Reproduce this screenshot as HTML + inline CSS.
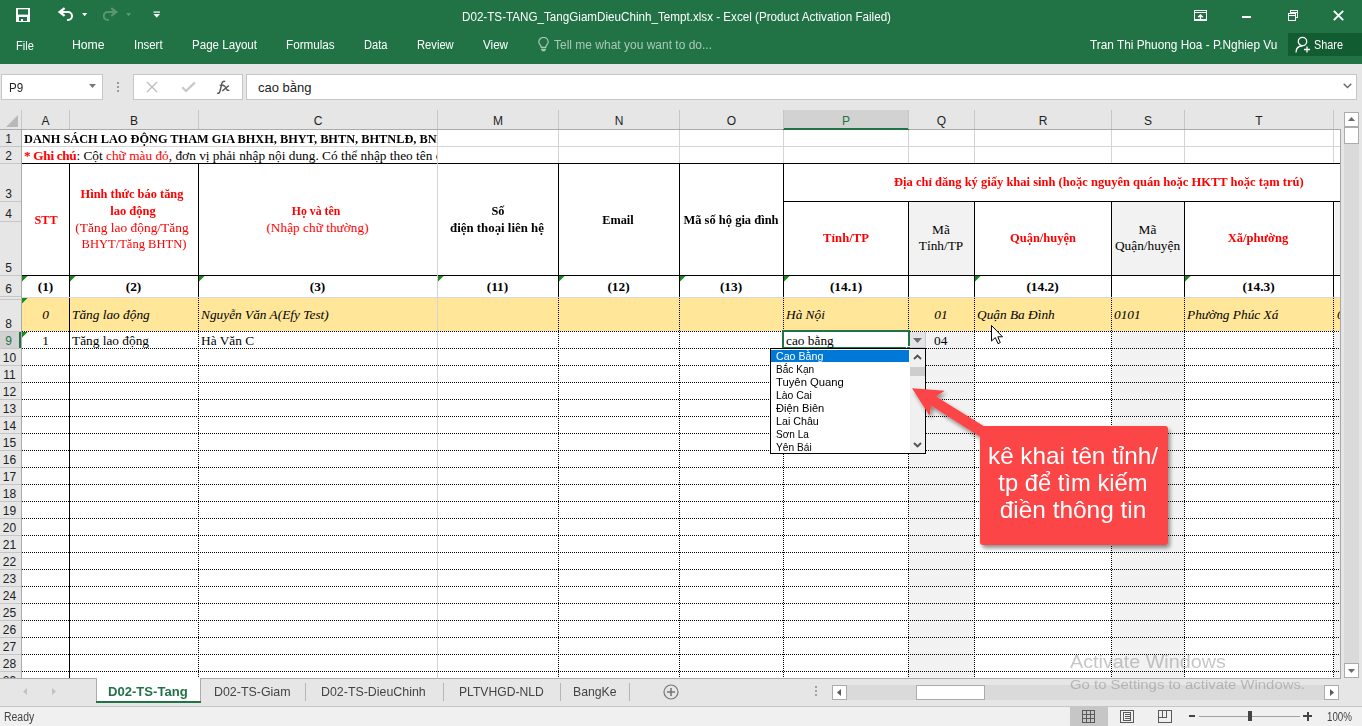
<!DOCTYPE html>
<html><head><meta charset="utf-8"><style>
html,body{margin:0;padding:0;width:1362px;height:726px;overflow:hidden;background:#fff;position:relative}
body div, body svg{position:absolute}
body div div{position:absolute}
</style></head><body>
<div style="left:0px;top:0px;width:1362px;height:64px;background:#217346"></div>
<div style="top:10.84px;font-family:'Liberation Sans', sans-serif;font-size:12px;line-height:12px;color:#fff;font-weight:normal;white-space:nowrap;transform:scaleX(0.9707);transform-origin:0 50%;left:462px;">D02-TS-TANG_TangGiamDieuChinh_Tempt.xlsx - Excel (Product Activation Failed)</div>
<svg style="left:0px;top:0px" width="170" height="30" viewBox="0 0 170 30"><rect x="16" y="8" width="14" height="14" fill="#fff"/><rect x="18" y="9.3" width="10" height="5.3" fill="#217346"/><rect x="19" y="17" width="8" height="4" fill="#217346"/><rect x="21" y="19" width="2" height="2" fill="#fff"/><path d="M60 12H68A4 4 0 0 1 68 20H67" fill="none" stroke="#fff" stroke-width="2"/><path d="M64.6 8.2L59.6 12L64.6 15.8" fill="none" stroke="#fff" stroke-width="2.3"/><path d="M82 13H87.2L84.6 16.2Z" fill="#fff"/><path d="M115.8 12H107.8A4 4 0 0 0 107.8 20H108.8" fill="none" stroke="#5a9673" stroke-width="2"/><path d="M111.2 8.2L116.2 12L111.2 15.8" fill="none" stroke="#5a9673" stroke-width="2.3"/><path d="M126 13H131.2L128.6 16.2Z" fill="#5a9673"/><rect x="153.5" y="11.5" width="6.5" height="1.2" fill="#fff"/><path d="M153.5 14H160L156.75 17.8Z" fill="#fff"/></svg>
<svg style="left:1193px;top:10px" width="15" height="11" viewBox="0 0 15 11" shape-rendering="crispEdges"><rect x="1.5" y="0.5" width="12" height="9.5" fill="none" stroke="#fff" stroke-width="1.2"/><line x1="1.5" y1="2.5" x2="13.5" y2="2.5" stroke="#fff" stroke-width="1"/></svg>
<svg style="left:1193px;top:10px" width="15" height="11" viewBox="0 0 15 11"><path d="M7.5 10.5V5M5.2 7.3L7.5 5L9.8 7.3" fill="none" stroke="#fff" stroke-width="1.3"/></svg>
<div style="left:1242px;top:16px;width:9px;height:2px;background:#fff"></div>
<svg style="left:1288px;top:10px" width="11" height="11" viewBox="0 0 11 11" shape-rendering="crispEdges"><rect x="0.5" y="3.5" width="7" height="7" fill="none" stroke="#fff" stroke-width="1.2"/><line x1="0.5" y1="5" x2="7.5" y2="5" stroke="#fff" stroke-width="1"/><path d="M2.5 3V0.5H9.5V7.5H8" fill="none" stroke="#fff" stroke-width="1.2"/><line x1="2.5" y1="2" x2="9.5" y2="2" stroke="#fff" stroke-width="1"/></svg>
<svg style="left:1333px;top:10px" width="11" height="11" viewBox="0 0 11 11"><path d="M0.8 0.8L10.2 10.2M10.2 0.8L0.8 10.2" stroke="#fff" stroke-width="1.9"/></svg>
<div style="top:40.14px;font-family:'Liberation Sans', sans-serif;font-size:12px;line-height:12px;color:#fff;font-weight:normal;white-space:nowrap;transform:scaleX(0.9213);transform-origin:0 50%;left:16.2px;">File</div>
<div style="top:39.24px;font-family:'Liberation Sans', sans-serif;font-size:12px;line-height:12px;color:#fff;font-weight:normal;white-space:nowrap;transform:scaleX(1.0175);transform-origin:0 50%;left:72.4px;">Home</div>
<div style="top:39.24px;font-family:'Liberation Sans', sans-serif;font-size:12px;line-height:12px;color:#fff;font-weight:normal;white-space:nowrap;transform:scaleX(0.9533);transform-origin:0 50%;left:134.4px;">Insert</div>
<div style="top:39.24px;font-family:'Liberation Sans', sans-serif;font-size:12px;line-height:12px;color:#fff;font-weight:normal;white-space:nowrap;transform:scaleX(0.9647);transform-origin:0 50%;left:192px;">Page Layout</div>
<div style="top:39.24px;font-family:'Liberation Sans', sans-serif;font-size:12px;line-height:12px;color:#fff;font-weight:normal;white-space:nowrap;transform:scaleX(0.9732);transform-origin:0 50%;left:286.1px;">Formulas</div>
<div style="top:39.24px;font-family:'Liberation Sans', sans-serif;font-size:12px;line-height:12px;color:#fff;font-weight:normal;white-space:nowrap;transform:scaleX(0.9259);transform-origin:0 50%;left:364.2px;">Data</div>
<div style="top:39.24px;font-family:'Liberation Sans', sans-serif;font-size:12px;line-height:12px;color:#fff;font-weight:normal;white-space:nowrap;transform:scaleX(0.9324);transform-origin:0 50%;left:417.1px;">Review</div>
<div style="top:39.24px;font-family:'Liberation Sans', sans-serif;font-size:12px;line-height:12px;color:#fff;font-weight:normal;white-space:nowrap;transform:scaleX(0.9690);transform-origin:0 50%;left:482.8px;">View</div>
<svg style="left:538px;top:37px" width="11" height="15" viewBox="0 0 11 15"><path d="M3.3 10.3C3.3 8.3 0.8 7.3 0.8 4.9a4.7 4.5 0 0 1 9.4 0c0 2.4-2.5 3.4-2.5 5.4z" fill="none" stroke="#a9c8b5" stroke-width="1.2"/><path d="M3 12.3h5M3.8 13.6h3.4" stroke="#a9c8b5" stroke-width="1.2"/></svg>
<div style="top:39.24px;font-family:'Liberation Sans', sans-serif;font-size:12px;line-height:12px;color:#a9c8b5;font-weight:normal;white-space:nowrap;transform:scaleX(0.9994);transform-origin:0 50%;left:554.1px;">Tell me what you want to do...</div>
<div style="top:39.24px;font-family:'Liberation Sans', sans-serif;font-size:12px;line-height:12px;color:#fff;font-weight:normal;white-space:nowrap;transform:scaleX(0.9851);transform-origin:0 50%;left:1090.4px;">Tran Thi Phuong Hoa - P.Nghiep Vu</div>
<div style="left:1288px;top:33px;width:74px;height:23px;background:#125c32"></div>
<svg style="left:1295px;top:36px" width="16" height="17" viewBox="0 0 16 17"><circle cx="7.5" cy="5.5" r="4.2" fill="none" stroke="#fff" stroke-width="1.3"/><path d="M1 16.5c0-4 2.5-6.5 6.5-6.5" fill="none" stroke="#fff" stroke-width="1.3"/><path d="M12 10.5v6M9 13.5h6" stroke="#fff" stroke-width="1.3"/></svg>
<div style="top:39.24px;font-family:'Liberation Sans', sans-serif;font-size:12px;line-height:12px;color:#fff;font-weight:normal;white-space:nowrap;transform:scaleX(0.9051);transform-origin:0 50%;left:1314px;">Share</div>
<div style="left:0px;top:64px;width:1362px;height:46px;background:#e6e6e6"></div>
<div style="left:1px;top:74px;width:102px;height:26px;background:#fff;border:1px solid #c6c6c6;box-sizing:border-box"></div>
<div style="top:82.02px;font-family:'Liberation Sans', sans-serif;font-size:12.5px;line-height:12.5px;color:#222;font-weight:normal;white-space:nowrap;transform:scaleX(0.9273);transform-origin:0 50%;left:8.7px;">P9</div>
<svg style="left:89px;top:84px" width="7" height="4" viewBox="0 0 7 4"><path d="M0 0h7L3.5 4z" fill="#777"/></svg>
<div style="left:117px;top:82px;width:2px;height:2px;background:#9a9a9a"></div>
<div style="left:117px;top:86px;width:2px;height:2px;background:#9a9a9a"></div>
<div style="left:117px;top:90px;width:2px;height:2px;background:#9a9a9a"></div>
<div style="left:133px;top:74px;width:110px;height:26px;background:#fff;border:1px solid #c6c6c6;box-sizing:border-box"></div>
<svg style="left:146px;top:81px" width="12" height="12" viewBox="0 0 12 12"><path d="M1 1L11 11M11 1L1 11" stroke="#bdbdbd" stroke-width="1.3"/></svg>
<svg style="left:181px;top:81px" width="15" height="12" viewBox="0 0 15 12"><path d="M1.2 6.2L5 10L13.8 1.6" fill="none" stroke="#c8c8c8" stroke-width="2.2"/></svg>
<svg style="left:214px;top:78px" width="20" height="18" viewBox="214 78 20 18"><path d="M225.2 81.6C223.6 81.0 222.4 81.6 221.9 83.4L219.9 91.6C219.4 93.3 218.5 93.6 217.2 93.0" fill="none" stroke="#555" stroke-width="1.5"/><path d="M219.6 85.3H223.9" stroke="#555" stroke-width="1.2"/><path d="M222.6 85.6C224.6 85.0 225.3 86.5 226 88.2C226.6 89.8 227.4 90.9 229.4 90.3M228.9 85.6C227.3 86.3 225.3 88.9 222.2 90.9" fill="none" stroke="#555" stroke-width="1.3"/></svg>
<div style="left:246px;top:74px;width:1111px;height:26px;background:#fff;border:1px solid #c6c6c6;box-sizing:border-box"></div>
<div style="top:81.00px;font-family:'Liberation Sans', sans-serif;font-size:13px;line-height:13px;color:#222;font-weight:normal;white-space:nowrap;left:258px;">cao bằng</div>
<svg style="left:1343px;top:83px" width="9" height="6" viewBox="0 0 9 6"><path d="M0.7 0.7L4.5 4.5L8.3 0.7" fill="none" stroke="#666" stroke-width="1.3"/></svg>
<div style="left:0px;top:110px;width:1341px;height:19px;background:#e6e6e6"></div>
<div style="left:0px;top:129px;width:1341px;height:1px;background:#ababab"></div>
<svg style="left:5px;top:114px" width="14" height="14" viewBox="0 0 14 14"><path d="M13 1V13H1z" fill="#b9b9b9"/></svg>
<div style="left:784px;top:110px;width:124px;height:19px;background:#d2d2d2"></div>
<div style="left:783px;top:128px;width:126px;height:2px;background:#217346"></div>
<div style="left:21px;top:110px;width:1px;height:19px;background:#c6c6c6"></div>
<div style="left:69px;top:110px;width:1px;height:19px;background:#c6c6c6"></div>
<div style="left:198px;top:110px;width:1px;height:19px;background:#c6c6c6"></div>
<div style="left:437px;top:110px;width:1px;height:19px;background:#c6c6c6"></div>
<div style="left:558px;top:110px;width:1px;height:19px;background:#c6c6c6"></div>
<div style="left:679px;top:110px;width:1px;height:19px;background:#c6c6c6"></div>
<div style="left:783px;top:110px;width:1px;height:19px;background:#c6c6c6"></div>
<div style="left:908px;top:110px;width:1px;height:19px;background:#c6c6c6"></div>
<div style="left:974px;top:110px;width:1px;height:19px;background:#c6c6c6"></div>
<div style="left:1111px;top:110px;width:1px;height:19px;background:#c6c6c6"></div>
<div style="left:1184px;top:110px;width:1px;height:19px;background:#c6c6c6"></div>
<div style="left:1333px;top:110px;width:1px;height:19px;background:#c6c6c6"></div>
<div style="top:115.24px;font-family:'Liberation Sans', sans-serif;font-size:12px;line-height:12px;color:#222;font-weight:normal;white-space:nowrap;left:-4.5px;width:100px;text-align:center;">A</div>
<div style="top:115.24px;font-family:'Liberation Sans', sans-serif;font-size:12px;line-height:12px;color:#222;font-weight:normal;white-space:nowrap;left:84.0px;width:100px;text-align:center;">B</div>
<div style="top:115.24px;font-family:'Liberation Sans', sans-serif;font-size:12px;line-height:12px;color:#222;font-weight:normal;white-space:nowrap;left:268.0px;width:100px;text-align:center;">C</div>
<div style="top:115.24px;font-family:'Liberation Sans', sans-serif;font-size:12px;line-height:12px;color:#222;font-weight:normal;white-space:nowrap;left:448.0px;width:100px;text-align:center;">M</div>
<div style="top:115.24px;font-family:'Liberation Sans', sans-serif;font-size:12px;line-height:12px;color:#222;font-weight:normal;white-space:nowrap;left:569.0px;width:100px;text-align:center;">N</div>
<div style="top:115.24px;font-family:'Liberation Sans', sans-serif;font-size:12px;line-height:12px;color:#222;font-weight:normal;white-space:nowrap;left:681.5px;width:100px;text-align:center;">O</div>
<div style="top:115.24px;font-family:'Liberation Sans', sans-serif;font-size:12px;line-height:12px;color:#217346;font-weight:normal;white-space:nowrap;left:796.0px;width:100px;text-align:center;">P</div>
<div style="top:115.24px;font-family:'Liberation Sans', sans-serif;font-size:12px;line-height:12px;color:#222;font-weight:normal;white-space:nowrap;left:891.5px;width:100px;text-align:center;">Q</div>
<div style="top:115.24px;font-family:'Liberation Sans', sans-serif;font-size:12px;line-height:12px;color:#222;font-weight:normal;white-space:nowrap;left:993.0px;width:100px;text-align:center;">R</div>
<div style="top:115.24px;font-family:'Liberation Sans', sans-serif;font-size:12px;line-height:12px;color:#222;font-weight:normal;white-space:nowrap;left:1098.0px;width:100px;text-align:center;">S</div>
<div style="top:115.24px;font-family:'Liberation Sans', sans-serif;font-size:12px;line-height:12px;color:#222;font-weight:normal;white-space:nowrap;left:1209.0px;width:100px;text-align:center;">T</div>
<div style="left:22px;top:130px;width:1318px;height:548px;background:#fff"></div>
<div style="left:0px;top:130px;width:21px;height:548px;background:#e6e6e6"></div>
<div style="left:21px;top:130px;width:1px;height:548px;background:#ababab"></div>
<div style="left:1340px;top:129px;width:1px;height:549px;background:#a6a6a6"></div>
<div style="left:0px;top:146px;width:21px;height:1px;background:#c6c6c6"></div>
<div style="left:0px;top:163px;width:21px;height:1px;background:#c6c6c6"></div>
<div style="left:0px;top:201px;width:21px;height:1px;background:#c6c6c6"></div>
<div style="left:0px;top:221px;width:21px;height:1px;background:#c6c6c6"></div>
<div style="left:0px;top:275px;width:21px;height:1px;background:#c6c6c6"></div>
<div style="left:0px;top:296px;width:21px;height:1px;background:#c6c6c6"></div>
<div style="left:0px;top:331px;width:21px;height:1px;background:#c6c6c6"></div>
<div style="left:0px;top:348px;width:21px;height:1px;background:#c6c6c6"></div>
<div style="left:0px;top:365px;width:21px;height:1px;background:#c6c6c6"></div>
<div style="left:0px;top:382px;width:21px;height:1px;background:#c6c6c6"></div>
<div style="left:0px;top:399px;width:21px;height:1px;background:#c6c6c6"></div>
<div style="left:0px;top:416px;width:21px;height:1px;background:#c6c6c6"></div>
<div style="left:0px;top:433px;width:21px;height:1px;background:#c6c6c6"></div>
<div style="left:0px;top:450px;width:21px;height:1px;background:#c6c6c6"></div>
<div style="left:0px;top:467px;width:21px;height:1px;background:#c6c6c6"></div>
<div style="left:0px;top:484px;width:21px;height:1px;background:#c6c6c6"></div>
<div style="left:0px;top:501px;width:21px;height:1px;background:#c6c6c6"></div>
<div style="left:0px;top:518px;width:21px;height:1px;background:#c6c6c6"></div>
<div style="left:0px;top:535px;width:21px;height:1px;background:#c6c6c6"></div>
<div style="left:0px;top:552px;width:21px;height:1px;background:#c6c6c6"></div>
<div style="left:0px;top:569px;width:21px;height:1px;background:#c6c6c6"></div>
<div style="left:0px;top:586px;width:21px;height:1px;background:#c6c6c6"></div>
<div style="left:0px;top:603px;width:21px;height:1px;background:#c6c6c6"></div>
<div style="left:0px;top:620px;width:21px;height:1px;background:#c6c6c6"></div>
<div style="left:0px;top:637px;width:21px;height:1px;background:#c6c6c6"></div>
<div style="left:0px;top:654px;width:21px;height:1px;background:#c6c6c6"></div>
<div style="left:0px;top:671px;width:21px;height:1px;background:#c6c6c6"></div>
<div style="left:0px;top:299px;width:21px;height:1px;background:#c6c6c6"></div>
<div style="left:0px;top:332px;width:21px;height:16px;background:#d2d2d2"></div>
<div style="left:19px;top:332px;width:2px;height:16px;background:#217346"></div>
<div style="top:132.64px;font-family:'Liberation Sans', sans-serif;font-size:12px;line-height:12px;color:#222;font-weight:normal;white-space:nowrap;left:-11.4px;width:40px;text-align:center;">1</div>
<div style="top:149.64px;font-family:'Liberation Sans', sans-serif;font-size:12px;line-height:12px;color:#222;font-weight:normal;white-space:nowrap;left:-11.4px;width:40px;text-align:center;">2</div>
<div style="top:187.64px;font-family:'Liberation Sans', sans-serif;font-size:12px;line-height:12px;color:#222;font-weight:normal;white-space:nowrap;left:-11.4px;width:40px;text-align:center;">3</div>
<div style="top:207.64px;font-family:'Liberation Sans', sans-serif;font-size:12px;line-height:12px;color:#222;font-weight:normal;white-space:nowrap;left:-11.4px;width:40px;text-align:center;">4</div>
<div style="top:261.64px;font-family:'Liberation Sans', sans-serif;font-size:12px;line-height:12px;color:#222;font-weight:normal;white-space:nowrap;left:-11.4px;width:40px;text-align:center;">5</div>
<div style="top:282.64px;font-family:'Liberation Sans', sans-serif;font-size:12px;line-height:12px;color:#222;font-weight:normal;white-space:nowrap;left:-11.4px;width:40px;text-align:center;">6</div>
<div style="top:317.64px;font-family:'Liberation Sans', sans-serif;font-size:12px;line-height:12px;color:#222;font-weight:normal;white-space:nowrap;left:-11.4px;width:40px;text-align:center;">8</div>
<div style="top:334.64px;font-family:'Liberation Sans', sans-serif;font-size:12px;line-height:12px;color:#217346;font-weight:normal;white-space:nowrap;left:-11.4px;width:40px;text-align:center;">9</div>
<div style="top:351.64px;font-family:'Liberation Sans', sans-serif;font-size:12px;line-height:12px;color:#222;font-weight:normal;white-space:nowrap;left:-10.6px;width:40px;text-align:center;">10</div>
<div style="top:368.64px;font-family:'Liberation Sans', sans-serif;font-size:12px;line-height:12px;color:#222;font-weight:normal;white-space:nowrap;left:-10.6px;width:40px;text-align:center;">11</div>
<div style="top:385.64px;font-family:'Liberation Sans', sans-serif;font-size:12px;line-height:12px;color:#222;font-weight:normal;white-space:nowrap;left:-10.6px;width:40px;text-align:center;">12</div>
<div style="top:402.64px;font-family:'Liberation Sans', sans-serif;font-size:12px;line-height:12px;color:#222;font-weight:normal;white-space:nowrap;left:-10.6px;width:40px;text-align:center;">13</div>
<div style="top:419.64px;font-family:'Liberation Sans', sans-serif;font-size:12px;line-height:12px;color:#222;font-weight:normal;white-space:nowrap;left:-10.6px;width:40px;text-align:center;">14</div>
<div style="top:436.64px;font-family:'Liberation Sans', sans-serif;font-size:12px;line-height:12px;color:#222;font-weight:normal;white-space:nowrap;left:-10.6px;width:40px;text-align:center;">15</div>
<div style="top:453.64px;font-family:'Liberation Sans', sans-serif;font-size:12px;line-height:12px;color:#222;font-weight:normal;white-space:nowrap;left:-10.6px;width:40px;text-align:center;">16</div>
<div style="top:470.64px;font-family:'Liberation Sans', sans-serif;font-size:12px;line-height:12px;color:#222;font-weight:normal;white-space:nowrap;left:-10.6px;width:40px;text-align:center;">17</div>
<div style="top:487.64px;font-family:'Liberation Sans', sans-serif;font-size:12px;line-height:12px;color:#222;font-weight:normal;white-space:nowrap;left:-10.6px;width:40px;text-align:center;">18</div>
<div style="top:504.64px;font-family:'Liberation Sans', sans-serif;font-size:12px;line-height:12px;color:#222;font-weight:normal;white-space:nowrap;left:-10.6px;width:40px;text-align:center;">19</div>
<div style="top:521.64px;font-family:'Liberation Sans', sans-serif;font-size:12px;line-height:12px;color:#222;font-weight:normal;white-space:nowrap;left:-10.6px;width:40px;text-align:center;">20</div>
<div style="top:538.64px;font-family:'Liberation Sans', sans-serif;font-size:12px;line-height:12px;color:#222;font-weight:normal;white-space:nowrap;left:-10.6px;width:40px;text-align:center;">21</div>
<div style="top:555.64px;font-family:'Liberation Sans', sans-serif;font-size:12px;line-height:12px;color:#222;font-weight:normal;white-space:nowrap;left:-10.6px;width:40px;text-align:center;">22</div>
<div style="top:572.64px;font-family:'Liberation Sans', sans-serif;font-size:12px;line-height:12px;color:#222;font-weight:normal;white-space:nowrap;left:-10.6px;width:40px;text-align:center;">23</div>
<div style="top:589.64px;font-family:'Liberation Sans', sans-serif;font-size:12px;line-height:12px;color:#222;font-weight:normal;white-space:nowrap;left:-10.6px;width:40px;text-align:center;">24</div>
<div style="top:606.64px;font-family:'Liberation Sans', sans-serif;font-size:12px;line-height:12px;color:#222;font-weight:normal;white-space:nowrap;left:-10.6px;width:40px;text-align:center;">25</div>
<div style="top:623.64px;font-family:'Liberation Sans', sans-serif;font-size:12px;line-height:12px;color:#222;font-weight:normal;white-space:nowrap;left:-10.6px;width:40px;text-align:center;">26</div>
<div style="top:640.64px;font-family:'Liberation Sans', sans-serif;font-size:12px;line-height:12px;color:#222;font-weight:normal;white-space:nowrap;left:-10.6px;width:40px;text-align:center;">27</div>
<div style="top:657.64px;font-family:'Liberation Sans', sans-serif;font-size:12px;line-height:12px;color:#222;font-weight:normal;white-space:nowrap;left:-10.6px;width:40px;text-align:center;">28</div>
<div style="top:674.64px;font-family:'Liberation Sans', sans-serif;font-size:12px;line-height:12px;color:#222;font-weight:normal;white-space:nowrap;left:-10.6px;width:40px;text-align:center;">29</div>
<div style="left:909px;top:202px;width:65px;height:74px;background:#f2f2f2"></div>
<div style="left:1112px;top:202px;width:72px;height:74px;background:#f2f2f2"></div>
<div style="left:22px;top:298px;width:1318px;height:33px;background:#ffe699"></div>
<div style="left:909px;top:332px;width:65px;height:346px;background:#f2f2f2"></div>
<div style="left:1112px;top:332px;width:72px;height:346px;background:#f2f2f2"></div>
<div style="left:1334px;top:332px;width:6px;height:346px;background:#f2f2f2"></div>
<div style="left:1335px;top:202px;width:5px;height:73px;background:#f2f2f2"></div>
<div style="left:22px;top:146px;width:1318px;height:1px;background:#d4d4d4"></div>
<div style="left:437px;top:130px;width:1px;height:33px;background:#d4d4d4"></div>
<div style="left:558px;top:130px;width:1px;height:33px;background:#d4d4d4"></div>
<div style="left:679px;top:130px;width:1px;height:33px;background:#d4d4d4"></div>
<div style="left:783px;top:130px;width:1px;height:33px;background:#d4d4d4"></div>
<div style="left:908px;top:130px;width:1px;height:33px;background:#d4d4d4"></div>
<div style="left:974px;top:130px;width:1px;height:33px;background:#d4d4d4"></div>
<div style="left:1111px;top:130px;width:1px;height:33px;background:#d4d4d4"></div>
<div style="left:1184px;top:130px;width:1px;height:33px;background:#d4d4d4"></div>
<div style="left:1333px;top:130px;width:1px;height:33px;background:#d4d4d4"></div>
<div style="left:22px;top:163px;width:1318px;height:1px;background:#000"></div>
<div style="left:783px;top:201px;width:557px;height:1px;background:#000"></div>
<div style="left:22px;top:275px;width:1318px;height:1px;background:#000"></div>
<div style="left:69px;top:163px;width:1px;height:134px;background:#000"></div>
<div style="left:198px;top:163px;width:1px;height:134px;background:#000"></div>
<div style="left:558px;top:163px;width:1px;height:134px;background:#000"></div>
<div style="left:679px;top:163px;width:1px;height:134px;background:#000"></div>
<div style="left:783px;top:163px;width:1px;height:134px;background:#000"></div>
<div style="left:908px;top:201px;width:1px;height:96px;background:#000"></div>
<div style="left:974px;top:201px;width:1px;height:96px;background:#000"></div>
<div style="left:1111px;top:201px;width:1px;height:96px;background:#000"></div>
<div style="left:1184px;top:201px;width:1px;height:96px;background:#000"></div>
<div style="left:1333px;top:201px;width:1px;height:96px;background:#000"></div>
<div style="left:22px;top:297px;width:1318px;height:1px;background:#d9d9d9"></div>
<div style="left:22px;top:331px;width:1318px;height:1px;background:repeating-linear-gradient(90deg,#000 0 1px,transparent 1px 2px)"></div>
<div style="left:22px;top:348px;width:1318px;height:1px;background:repeating-linear-gradient(90deg,#000 0 1px,transparent 1px 2px)"></div>
<div style="left:22px;top:365px;width:1318px;height:1px;background:repeating-linear-gradient(90deg,#000 0 1px,transparent 1px 2px)"></div>
<div style="left:22px;top:382px;width:1318px;height:1px;background:repeating-linear-gradient(90deg,#000 0 1px,transparent 1px 2px)"></div>
<div style="left:22px;top:399px;width:1318px;height:1px;background:repeating-linear-gradient(90deg,#000 0 1px,transparent 1px 2px)"></div>
<div style="left:22px;top:416px;width:1318px;height:1px;background:repeating-linear-gradient(90deg,#000 0 1px,transparent 1px 2px)"></div>
<div style="left:22px;top:433px;width:1318px;height:1px;background:repeating-linear-gradient(90deg,#000 0 1px,transparent 1px 2px)"></div>
<div style="left:22px;top:450px;width:1318px;height:1px;background:repeating-linear-gradient(90deg,#000 0 1px,transparent 1px 2px)"></div>
<div style="left:22px;top:467px;width:1318px;height:1px;background:repeating-linear-gradient(90deg,#000 0 1px,transparent 1px 2px)"></div>
<div style="left:22px;top:484px;width:1318px;height:1px;background:repeating-linear-gradient(90deg,#000 0 1px,transparent 1px 2px)"></div>
<div style="left:22px;top:501px;width:1318px;height:1px;background:repeating-linear-gradient(90deg,#000 0 1px,transparent 1px 2px)"></div>
<div style="left:22px;top:518px;width:1318px;height:1px;background:repeating-linear-gradient(90deg,#000 0 1px,transparent 1px 2px)"></div>
<div style="left:22px;top:535px;width:1318px;height:1px;background:repeating-linear-gradient(90deg,#000 0 1px,transparent 1px 2px)"></div>
<div style="left:22px;top:552px;width:1318px;height:1px;background:repeating-linear-gradient(90deg,#000 0 1px,transparent 1px 2px)"></div>
<div style="left:22px;top:569px;width:1318px;height:1px;background:repeating-linear-gradient(90deg,#000 0 1px,transparent 1px 2px)"></div>
<div style="left:22px;top:586px;width:1318px;height:1px;background:repeating-linear-gradient(90deg,#000 0 1px,transparent 1px 2px)"></div>
<div style="left:22px;top:603px;width:1318px;height:1px;background:repeating-linear-gradient(90deg,#000 0 1px,transparent 1px 2px)"></div>
<div style="left:22px;top:620px;width:1318px;height:1px;background:repeating-linear-gradient(90deg,#000 0 1px,transparent 1px 2px)"></div>
<div style="left:22px;top:637px;width:1318px;height:1px;background:repeating-linear-gradient(90deg,#000 0 1px,transparent 1px 2px)"></div>
<div style="left:22px;top:654px;width:1318px;height:1px;background:repeating-linear-gradient(90deg,#000 0 1px,transparent 1px 2px)"></div>
<div style="left:22px;top:671px;width:1318px;height:1px;background:repeating-linear-gradient(90deg,#000 0 1px,transparent 1px 2px)"></div>
<div style="left:69px;top:298px;width:1px;height:380px;background:#000"></div>
<div style="left:198px;top:298px;width:1px;height:380px;background:repeating-linear-gradient(180deg,#000 0 1px,transparent 1px 2px)"></div>
<div style="left:558px;top:298px;width:1px;height:380px;background:repeating-linear-gradient(180deg,#000 0 1px,transparent 1px 2px)"></div>
<div style="left:679px;top:298px;width:1px;height:380px;background:repeating-linear-gradient(180deg,#000 0 1px,transparent 1px 2px)"></div>
<div style="left:783px;top:298px;width:1px;height:380px;background:repeating-linear-gradient(180deg,#000 0 1px,transparent 1px 2px)"></div>
<div style="left:908px;top:298px;width:1px;height:380px;background:repeating-linear-gradient(180deg,#000 0 1px,transparent 1px 2px)"></div>
<div style="left:974px;top:298px;width:1px;height:380px;background:repeating-linear-gradient(180deg,#000 0 1px,transparent 1px 2px)"></div>
<div style="left:1111px;top:298px;width:1px;height:380px;background:repeating-linear-gradient(180deg,#000 0 1px,transparent 1px 2px)"></div>
<div style="left:1184px;top:298px;width:1px;height:380px;background:repeating-linear-gradient(180deg,#000 0 1px,transparent 1px 2px)"></div>
<div style="left:1333px;top:298px;width:1px;height:380px;background:repeating-linear-gradient(180deg,#000 0 1px,transparent 1px 2px)"></div>
<div style="left:437px;top:130px;width:1px;height:548px;background:#d4d4d4"></div>
<svg style="left:22px;top:276px" width="6" height="6" viewBox="0 0 6 6"><path d="M0 0H5.6L0 5.6z" fill="#128a1e"/></svg>
<svg style="left:70px;top:276px" width="6" height="6" viewBox="0 0 6 6"><path d="M0 0H5.6L0 5.6z" fill="#128a1e"/></svg>
<svg style="left:199px;top:276px" width="6" height="6" viewBox="0 0 6 6"><path d="M0 0H5.6L0 5.6z" fill="#128a1e"/></svg>
<svg style="left:438px;top:276px" width="6" height="6" viewBox="0 0 6 6"><path d="M0 0H5.6L0 5.6z" fill="#128a1e"/></svg>
<svg style="left:559px;top:276px" width="6" height="6" viewBox="0 0 6 6"><path d="M0 0H5.6L0 5.6z" fill="#128a1e"/></svg>
<svg style="left:680px;top:276px" width="6" height="6" viewBox="0 0 6 6"><path d="M0 0H5.6L0 5.6z" fill="#128a1e"/></svg>
<svg style="left:784px;top:276px" width="6" height="6" viewBox="0 0 6 6"><path d="M0 0H5.6L0 5.6z" fill="#128a1e"/></svg>
<svg style="left:975px;top:276px" width="6" height="6" viewBox="0 0 6 6"><path d="M0 0H5.6L0 5.6z" fill="#128a1e"/></svg>
<svg style="left:1185px;top:276px" width="6" height="6" viewBox="0 0 6 6"><path d="M0 0H5.6L0 5.6z" fill="#128a1e"/></svg>
<svg style="left:22px;top:298px" width="6" height="6" viewBox="0 0 6 6"><path d="M0 0H5.6L0 5.6z" fill="#128a1e"/></svg>
<svg style="left:22px;top:332px" width="6" height="6" viewBox="0 0 6 6"><path d="M0 0H5.6L0 5.6z" fill="#128a1e"/></svg>
<div style="left:22px;top:130px;width:415px;height:33px;overflow:hidden">
<div style="top:2.14px;font-family:'Liberation Serif', serif;font-size:13.33px;line-height:13.33px;color:#000;font-weight:bold;white-space:nowrap;transform:scaleX(0.9250);transform-origin:0 50%;left:2px;">DANH SÁCH LAO ĐỘNG THAM GIA BHXH, BHYT, BHTN, BHTNLĐ, BNN</div>
<div style="top:18.84px;font-family:'Liberation Serif', serif;font-size:13.33px;line-height:13.33px;color:#000;font-weight:normal;white-space:nowrap;left:2px;"><b style="color:#f00;letter-spacing:-0.35px">* Ghi chú</b>: Cột <span style="color:#f00">chữ màu đỏ</span>, đơn vị phải nhập nội dung. Có thể nhập theo tên của</div>
</div>
<div style="top:212.84px;font-family:'Liberation Serif', serif;font-size:13.33px;line-height:13.33px;color:#ff0000;font-weight:bold;white-space:nowrap;transform:scaleX(0.9169);transform-origin:50% 50%;left:22.75px;width:46px;text-align:center;">STT</div>
<div style="top:186.84px;font-family:'Liberation Serif', serif;font-size:13.33px;line-height:13.33px;color:#ff0000;font-weight:bold;white-space:nowrap;transform:scaleX(0.9306);transform-origin:50% 50%;left:68.1px;width:128px;text-align:center;">Hình thức báo tăng</div>
<div style="top:203.84px;font-family:'Liberation Serif', serif;font-size:13.33px;line-height:13.33px;color:#ff0000;font-weight:bold;white-space:nowrap;transform:scaleX(0.9377);transform-origin:50% 50%;left:69.1px;width:128px;text-align:center;">lao động</div>
<div style="top:220.84px;font-family:'Liberation Serif', serif;font-size:13.33px;line-height:13.33px;color:#ff0000;font-weight:normal;white-space:nowrap;transform:scaleX(1.0080);transform-origin:50% 50%;left:67.9px;width:128px;text-align:center;">(Tăng lao động/Tăng</div>
<div style="top:237.34px;font-family:'Liberation Serif', serif;font-size:13.33px;line-height:13.33px;color:#ff0000;font-weight:normal;white-space:nowrap;transform:scaleX(0.9413);transform-origin:50% 50%;left:69.94999999999999px;width:128px;text-align:center;">BHYT/Tăng BHTN)</div>
<div style="top:203.84px;font-family:'Liberation Serif', serif;font-size:13.33px;line-height:13.33px;color:#ff0000;font-weight:bold;white-space:nowrap;transform:scaleX(0.8834);transform-origin:50% 50%;left:197.39999999999998px;width:238px;text-align:center;">Họ và tên</div>
<div style="top:220.84px;font-family:'Liberation Serif', serif;font-size:13.33px;line-height:13.33px;color:#ff0000;font-weight:normal;white-space:nowrap;left:198.5px;width:238px;text-align:center;">(Nhập chữ thường)</div>
<div style="top:203.84px;font-family:'Liberation Serif', serif;font-size:13.33px;line-height:13.33px;color:#000;font-weight:bold;white-space:nowrap;transform:scaleX(0.9250);transform-origin:50% 50%;left:437.5px;width:120px;text-align:center;">Số</div>
<div style="top:220.84px;font-family:'Liberation Serif', serif;font-size:13.33px;line-height:13.33px;color:#000;font-weight:bold;white-space:nowrap;transform:scaleX(0.9633);transform-origin:50% 50%;left:437.2px;width:120px;text-align:center;">điện thoại liên hệ</div>
<div style="top:213.14px;font-family:'Liberation Serif', serif;font-size:13.33px;line-height:13.33px;color:#000;font-weight:bold;white-space:nowrap;transform:scaleX(0.9220);transform-origin:50% 50%;left:558.4px;width:120px;text-align:center;">Email</div>
<div style="top:213.14px;font-family:'Liberation Serif', serif;font-size:13.33px;line-height:13.33px;color:#000;font-weight:bold;white-space:nowrap;transform:scaleX(0.9369);transform-origin:50% 50%;left:671.2px;width:120px;text-align:center;">Mã số hộ gia đình</div>
<div style="top:175.34px;font-family:'Liberation Serif', serif;font-size:13.33px;line-height:13.33px;color:#ff0000;font-weight:bold;white-space:nowrap;transform:scaleX(0.9396);transform-origin:0 50%;left:893.7px;">Địa chỉ đăng ký giấy khai sinh (hoặc nguyên quán hoặc HKTT hoặc tạm trú)</div>
<div style="top:231.34px;font-family:'Liberation Serif', serif;font-size:13.33px;line-height:13.33px;color:#ff0000;font-weight:bold;white-space:nowrap;transform:scaleX(0.9504);transform-origin:50% 50%;left:783.9px;width:124px;text-align:center;">Tỉnh/TP</div>
<div style="top:222.84px;font-family:'Liberation Serif', serif;font-size:13.33px;line-height:13.33px;color:#000;font-weight:normal;white-space:nowrap;left:908.5px;width:65px;text-align:center;">Mã</div>
<div style="top:239.34px;font-family:'Liberation Serif', serif;font-size:13.33px;line-height:13.33px;color:#000;font-weight:normal;white-space:nowrap;left:908.5px;width:65px;text-align:center;">Tỉnh/TP</div>
<div style="top:231.34px;font-family:'Liberation Serif', serif;font-size:13.33px;line-height:13.33px;color:#ff0000;font-weight:bold;white-space:nowrap;transform:scaleX(0.9392);transform-origin:50% 50%;left:974.5px;width:136px;text-align:center;">Quận/huyện</div>
<div style="top:222.84px;font-family:'Liberation Serif', serif;font-size:13.33px;line-height:13.33px;color:#000;font-weight:normal;white-space:nowrap;left:1111.5px;width:72px;text-align:center;">Mã</div>
<div style="top:239.34px;font-family:'Liberation Serif', serif;font-size:13.33px;line-height:13.33px;color:#000;font-weight:normal;white-space:nowrap;left:1111.5px;width:72px;text-align:center;">Quận/huyện</div>
<div style="top:231.34px;font-family:'Liberation Serif', serif;font-size:13.33px;line-height:13.33px;color:#ff0000;font-weight:bold;white-space:nowrap;transform:scaleX(0.9432);transform-origin:50% 50%;left:1184.0px;width:148px;text-align:center;">Xã/phường</div>
<div style="top:279.84px;font-family:'Liberation Serif', serif;font-size:13.33px;line-height:13.33px;color:#000;font-weight:bold;white-space:nowrap;transform:scaleX(1.0000);transform-origin:50% 50%;left:-14.5px;width:120px;text-align:center;">(1)</div>
<div style="top:279.84px;font-family:'Liberation Serif', serif;font-size:13.33px;line-height:13.33px;color:#000;font-weight:bold;white-space:nowrap;transform:scaleX(1.0000);transform-origin:50% 50%;left:73.5px;width:120px;text-align:center;">(2)</div>
<div style="top:279.84px;font-family:'Liberation Serif', serif;font-size:13.33px;line-height:13.33px;color:#000;font-weight:bold;white-space:nowrap;transform:scaleX(1.0000);transform-origin:50% 50%;left:257.5px;width:120px;text-align:center;">(3)</div>
<div style="top:279.84px;font-family:'Liberation Serif', serif;font-size:13.33px;line-height:13.33px;color:#000;font-weight:bold;white-space:nowrap;transform:scaleX(1.0000);transform-origin:50% 50%;left:437.5px;width:120px;text-align:center;">(11)</div>
<div style="top:279.84px;font-family:'Liberation Serif', serif;font-size:13.33px;line-height:13.33px;color:#000;font-weight:bold;white-space:nowrap;transform:scaleX(1.0000);transform-origin:50% 50%;left:558.5px;width:120px;text-align:center;">(12)</div>
<div style="top:279.84px;font-family:'Liberation Serif', serif;font-size:13.33px;line-height:13.33px;color:#000;font-weight:bold;white-space:nowrap;transform:scaleX(1.0000);transform-origin:50% 50%;left:671.0px;width:120px;text-align:center;">(13)</div>
<div style="top:279.84px;font-family:'Liberation Serif', serif;font-size:13.33px;line-height:13.33px;color:#000;font-weight:bold;white-space:nowrap;transform:scaleX(1.0000);transform-origin:50% 50%;left:786.0px;width:120px;text-align:center;">(14.1)</div>
<div style="top:279.84px;font-family:'Liberation Serif', serif;font-size:13.33px;line-height:13.33px;color:#000;font-weight:bold;white-space:nowrap;transform:scaleX(1.0000);transform-origin:50% 50%;left:982.5px;width:120px;text-align:center;">(14.2)</div>
<div style="top:279.84px;font-family:'Liberation Serif', serif;font-size:13.33px;line-height:13.33px;color:#000;font-weight:bold;white-space:nowrap;transform:scaleX(1.0000);transform-origin:50% 50%;left:1198.5px;width:120px;text-align:center;">(14.3)</div>
<div style="top:308.34px;font-family:'Liberation Serif', serif;font-size:13.33px;line-height:13.33px;color:#000;font-weight:normal;white-space:nowrap;font-style:italic;left:22.5px;width:46px;text-align:center;">0</div>
<div style="top:308.34px;font-family:'Liberation Serif', serif;font-size:13.33px;line-height:13.33px;color:#000;font-weight:normal;white-space:nowrap;font-style:italic;left:72px;">Tăng lao động</div>
<div style="top:308.34px;font-family:'Liberation Serif', serif;font-size:13.33px;line-height:13.33px;color:#000;font-weight:normal;white-space:nowrap;font-style:italic;left:201px;">Nguyễn Văn A(Efy Test)</div>
<div style="top:308.34px;font-family:'Liberation Serif', serif;font-size:13.33px;line-height:13.33px;color:#000;font-weight:normal;white-space:nowrap;font-style:italic;left:786px;">Hà Nội</div>
<div style="top:308.34px;font-family:'Liberation Serif', serif;font-size:13.33px;line-height:13.33px;color:#000;font-weight:normal;white-space:nowrap;font-style:italic;left:908.5px;width:65px;text-align:center;">01</div>
<div style="top:308.34px;font-family:'Liberation Serif', serif;font-size:13.33px;line-height:13.33px;color:#000;font-weight:normal;white-space:nowrap;font-style:italic;left:977px;">Quận Ba Đình</div>
<div style="top:308.34px;font-family:'Liberation Serif', serif;font-size:13.33px;line-height:13.33px;color:#000;font-weight:normal;white-space:nowrap;font-style:italic;left:1114px;">0101</div>
<div style="top:308.34px;font-family:'Liberation Serif', serif;font-size:13.33px;line-height:13.33px;color:#000;font-weight:normal;white-space:nowrap;font-style:italic;left:1187px;">Phường Phúc Xá</div>
<div style="left:1334px;top:299px;width:6px;height:32px;overflow:hidden">
<div style="top:9.34px;font-family:'Liberation Serif', serif;font-size:13.33px;line-height:13.33px;color:#000;font-weight:normal;white-space:nowrap;font-style:italic;left:3px;">0</div>
</div>
<div style="top:334.34px;font-family:'Liberation Serif', serif;font-size:13.33px;line-height:13.33px;color:#000;font-weight:normal;white-space:nowrap;left:22.5px;width:46px;text-align:center;">1</div>
<div style="top:334.34px;font-family:'Liberation Serif', serif;font-size:13.33px;line-height:13.33px;color:#000;font-weight:normal;white-space:nowrap;left:72px;">Tăng lao động</div>
<div style="top:334.34px;font-family:'Liberation Serif', serif;font-size:13.33px;line-height:13.33px;color:#000;font-weight:normal;white-space:nowrap;left:201px;">Hà Văn C</div>
<div style="top:334.34px;font-family:'Liberation Serif', serif;font-size:13.33px;line-height:13.33px;color:#000;font-weight:normal;white-space:nowrap;left:934px;">04</div>
<div style="left:782px;top:330px;width:128px;height:19px;border:2px solid #217346;box-sizing:border-box;background:#fff"></div>
<div style="left:906px;top:346px;width:4px;height:4px;background:#217346;border:1px solid #fff"></div>
<div style="top:334.34px;font-family:'Liberation Serif', serif;font-size:13.33px;line-height:13.33px;color:#000;font-weight:normal;white-space:nowrap;left:786px;">cao bằng</div>
<div style="left:910px;top:332px;width:16px;height:16px;background:#e4e4e6;border-right:1px solid #c9c9c9;border-bottom:1px solid #c9c9c9;box-sizing:border-box"></div>
<svg style="left:913px;top:338px" width="9" height="5" viewBox="0 0 9 5"><path d="M0 0h9L4.5 5z" fill="#6d6d6d"/></svg>
<div style="left:770px;top:348px;width:156px;height:106px;background:#fff;border:1px solid #000;box-sizing:border-box"></div>
<div style="left:771px;top:350px;width:138px;height:12px;background:#0078d7"></div>
<div style="top:351.27px;font-family:'Liberation Sans', sans-serif;font-size:11.5px;line-height:11.5px;color:#fff;font-weight:normal;white-space:nowrap;transform:scaleX(0.9262);transform-origin:0 50%;left:775.8px;">Cao Bằng</div>
<div style="top:364.27px;font-family:'Liberation Sans', sans-serif;font-size:11.5px;line-height:11.5px;color:#000;font-weight:normal;white-space:nowrap;transform:scaleX(0.8765);transform-origin:0 50%;left:775.8px;">Bắc Kạn</div>
<div style="top:377.27px;font-family:'Liberation Sans', sans-serif;font-size:11.5px;line-height:11.5px;color:#000;font-weight:normal;white-space:nowrap;transform:scaleX(0.9800);transform-origin:0 50%;left:775.8px;">Tuyên Quang</div>
<div style="top:390.27px;font-family:'Liberation Sans', sans-serif;font-size:11.5px;line-height:11.5px;color:#000;font-weight:normal;white-space:nowrap;transform:scaleX(0.9062);transform-origin:0 50%;left:775.8px;">Lào Cai</div>
<div style="top:403.27px;font-family:'Liberation Sans', sans-serif;font-size:11.5px;line-height:11.5px;color:#000;font-weight:normal;white-space:nowrap;transform:scaleX(0.9689);transform-origin:0 50%;left:775.8px;">Điện Biên</div>
<div style="top:416.27px;font-family:'Liberation Sans', sans-serif;font-size:11.5px;line-height:11.5px;color:#000;font-weight:normal;white-space:nowrap;transform:scaleX(0.9293);transform-origin:0 50%;left:775.8px;">Lai Châu</div>
<div style="top:429.27px;font-family:'Liberation Sans', sans-serif;font-size:11.5px;line-height:11.5px;color:#000;font-weight:normal;white-space:nowrap;transform:scaleX(0.8735);transform-origin:0 50%;left:775.8px;">Sơn La</div>
<div style="top:442.27px;font-family:'Liberation Sans', sans-serif;font-size:11.5px;line-height:11.5px;color:#000;font-weight:normal;white-space:nowrap;transform:scaleX(0.8857);transform-origin:0 50%;left:775.8px;">Yên Bái</div>
<div style="left:910px;top:349px;width:15px;height:104px;background:#f0f0f0"></div>
<div style="left:910px;top:367px;width:15px;height:9px;background:#cdcdcd"></div>
<svg style="left:913px;top:354px" width="9" height="6" viewBox="0 0 9 6"><path d="M1 5L4.5 1.5L8 5" fill="none" stroke="#505050" stroke-width="1.8"/></svg>
<svg style="left:913px;top:442px" width="9" height="6" viewBox="0 0 9 6"><path d="M1 1L4.5 4.5L8 1" fill="none" stroke="#505050" stroke-width="1.8"/></svg>
<svg style="left:900px;top:380px;overflow:visible" width="280" height="180" viewBox="900 380 280 180"><defs><filter id="sh" x="-20%" y="-20%" width="140%" height="140%"><feGaussianBlur in="SourceAlpha" stdDeviation="2"/><feOffset dx="2" dy="3"/><feComponentTransfer><feFuncA type="linear" slope="0.45"/></feComponentTransfer><feMerge><feMergeNode/><feMergeNode in="SourceGraphic"/></feMerge></filter></defs><g filter="url(#sh)" fill="#fc4446"><path d="M912 388.2L944.7 390.8L936.1 396.6L990 430L985 440L931 405.6L929.6 415.7Z"/><rect x="980" y="426" width="188" height="119" rx="3"/></g></svg>
<div style="top:443.98px;font-family:'Liberation Sans', sans-serif;font-size:24px;line-height:24px;color:#fff;font-weight:normal;white-space:nowrap;transform:scaleX(1.0112);transform-origin:50% 50%;left:922.7px;width:300px;text-align:center;">kê khai tên tỉnh/</div>
<div style="top:470.68px;font-family:'Liberation Sans', sans-serif;font-size:24px;line-height:24px;color:#fff;font-weight:normal;white-space:nowrap;transform:scaleX(0.9906);transform-origin:50% 50%;left:922.7px;width:300px;text-align:center;">tp để tìm kiếm</div>
<div style="top:497.68px;font-family:'Liberation Sans', sans-serif;font-size:24px;line-height:24px;color:#fff;font-weight:normal;white-space:nowrap;transform:scaleX(1.0165);transform-origin:50% 50%;left:922.7px;width:300px;text-align:center;">điền thông tin</div>
<svg style="left:991px;top:325px" width="13" height="20" viewBox="0 0 13 20"><path d="M0.5 0.5V16L4.3 12.6L7 18.6L9.3 17.6L6.8 11.8H11.5Z" fill="#fff" stroke="#000" stroke-width="1"/></svg>
<div style="left:1341px;top:110px;width:21px;height:568px;background:#e6e6e6"></div>
<div style="left:1344px;top:144px;width:15px;height:519px;background:#dadada"></div>
<div style="left:1344px;top:112px;width:15px;height:15px;background:#fff;border:1px solid #ababab;box-sizing:border-box"></div>
<svg style="left:1348px;top:117px" width="7" height="4" viewBox="0 0 7 4"><path d="M0 4h7L3.5 0z" fill="#6a6a6a"/></svg>
<div style="left:1344px;top:127px;width:15px;height:17px;background:#fff;border:1px solid #ababab;box-sizing:border-box"></div>
<div style="left:1344px;top:663px;width:15px;height:15px;background:#fff;border:1px solid #ababab;box-sizing:border-box"></div>
<svg style="left:1348px;top:669px" width="7" height="4" viewBox="0 0 7 4"><path d="M0 0h7L3.5 4z" fill="#6a6a6a"/></svg>
<div style="left:0px;top:678px;width:1362px;height:28px;background:#e6e6e6"></div>
<div style="left:0px;top:678px;width:96px;height:1px;background:#ababab"></div>
<div style="left:201px;top:678px;width:1140px;height:1px;background:#ababab"></div>
<svg style="left:23px;top:688px" width="4" height="7" viewBox="0 0 4 7"><path d="M4 0V7L0 3.5z" fill="#c2c2c2"/></svg>
<svg style="left:52px;top:688px" width="4" height="7" viewBox="0 0 4 7"><path d="M0 0V7L4 3.5z" fill="#c2c2c2"/></svg>
<div style="left:96px;top:678px;width:105px;height:25px;background:#fff;border-left:1px solid #ababab;border-right:1px solid #ababab;box-sizing:border-box"></div>
<div style="left:96px;top:701px;width:105px;height:2px;background:#217346"></div>
<div style="top:685.30px;font-family:'Liberation Sans', sans-serif;font-size:13px;line-height:13px;color:#217346;font-weight:bold;white-space:nowrap;transform:scaleX(1.0059);transform-origin:0 50%;left:107.9px;">D02-TS-Tang</div>
<div style="top:685.30px;font-family:'Liberation Sans', sans-serif;font-size:13px;line-height:13px;color:#444;font-weight:normal;white-space:nowrap;transform:scaleX(0.9550);transform-origin:0 50%;left:214.3px;">D02-TS-Giam</div>
<div style="left:305px;top:683px;width:1px;height:18px;background:#b5b5b5"></div>
<div style="top:685.30px;font-family:'Liberation Sans', sans-serif;font-size:13px;line-height:13px;color:#444;font-weight:normal;white-space:nowrap;transform:scaleX(0.9540);transform-origin:0 50%;left:321.2px;">D02-TS-DieuChinh</div>
<div style="left:443px;top:683px;width:1px;height:18px;background:#b5b5b5"></div>
<div style="top:685.30px;font-family:'Liberation Sans', sans-serif;font-size:13px;line-height:13px;color:#444;font-weight:normal;white-space:nowrap;transform:scaleX(0.9339);transform-origin:0 50%;left:458.9px;">PLTVHGD-NLD</div>
<div style="left:560px;top:683px;width:1px;height:18px;background:#b5b5b5"></div>
<div style="top:685.30px;font-family:'Liberation Sans', sans-serif;font-size:13px;line-height:13px;color:#444;font-weight:normal;white-space:nowrap;transform:scaleX(0.9421);transform-origin:0 50%;left:573px;">BangKe</div>
<div style="left:629px;top:683px;width:1px;height:18px;background:#b5b5b5"></div>
<svg style="left:663px;top:684px" width="16" height="16" viewBox="0 0 16 16"><circle cx="8" cy="8" r="7" fill="none" stroke="#777" stroke-width="1.2"/><path d="M8 4v8M4 8h8" stroke="#777" stroke-width="1.6"/></svg>
<div style="left:815px;top:686px;width:2px;height:2px;background:#a0a0a0"></div>
<div style="left:815px;top:690px;width:2px;height:2px;background:#a0a0a0"></div>
<div style="left:815px;top:694px;width:2px;height:2px;background:#a0a0a0"></div>
<div style="left:832px;top:685px;width:507px;height:15px;background:#dadada"></div>
<div style="left:832px;top:685px;width:15px;height:15px;background:#fff;border:1px solid #ababab;box-sizing:border-box"></div>
<svg style="left:837px;top:689px" width="4" height="7" viewBox="0 0 4 7"><path d="M4 0V7L0 3.5z" fill="#5a5a5a"/></svg>
<div style="left:916px;top:685px;width:69px;height:15px;background:#fff;border:1px solid #ababab;box-sizing:border-box"></div>
<div style="left:1324px;top:685px;width:15px;height:15px;background:#fff;border:1px solid #ababab;box-sizing:border-box"></div>
<svg style="left:1330px;top:689px" width="4" height="7" viewBox="0 0 4 7"><path d="M0 0V7L4 3.5z" fill="#5a5a5a"/></svg>
<div style="left:0px;top:706px;width:1362px;height:1px;background:#c6c6c6"></div>
<div style="left:0px;top:707px;width:1362px;height:19px;background:#f0f0f0"></div>
<div style="top:711.34px;font-family:'Liberation Sans', sans-serif;font-size:12px;line-height:12px;color:#444;font-weight:normal;white-space:nowrap;transform:scaleX(0.8708);transform-origin:0 50%;left:3.5px;">Ready</div>
<div style="left:1070px;top:707px;width:38px;height:19px;background:#c6c6c6"></div>
<svg style="left:1082px;top:710px" width="13" height="13" viewBox="0 0 13 13" shape-rendering="crispEdges"><path d="M0.5 0.5h12v12h-12zM4.5 0.5v12M8.5 0.5v12M0.5 4.5h12M0.5 8.5h12" fill="none" stroke="#5a5a5a" stroke-width="1"/></svg>
<svg style="left:1120px;top:710px" width="14" height="13" viewBox="0 0 14 13" shape-rendering="crispEdges"><path d="M0.5 0.5h13v12h-13zM3.5 2.5H10.5V10.5H3.5Z" fill="none" stroke="#5a5a5a" stroke-width="1"/><path d="M4.5 4.5h5M4.5 6.5h5M4.5 8.5h5" fill="none" stroke="#5a5a5a" stroke-width="1"/></svg>
<svg style="left:1158px;top:710px" width="14" height="13" viewBox="0 0 14 13" shape-rendering="crispEdges"><path d="M0.5 0.5h13v12h-13zM0.5 7.5h8V0.5M4.5 0.5v7" fill="none" stroke="#5a5a5a" stroke-width="1"/></svg>
<div style="left:1189px;top:715px;width:6px;height:2px;background:#444"></div>
<div style="left:1199px;top:716px;width:101px;height:1px;background:#a0a0a0"></div>
<div style="left:1248px;top:711px;width:4px;height:10px;background:#444"></div>
<div style="left:1303px;top:715px;width:9px;height:2px;background:#444"></div>
<div style="left:1306.5px;top:711.5px;width:2px;height:9px;background:#444"></div>
<div style="top:710.84px;font-family:'Liberation Sans', sans-serif;font-size:12px;line-height:12px;color:#444;font-weight:normal;white-space:nowrap;transform:scaleX(0.8138);transform-origin:0 50%;left:1327px;">100%</div>
<div style="top:653.34px;font-family:'Liberation Sans', sans-serif;font-size:18.5px;line-height:18.5px;color:rgba(120,120,120,0.42);font-weight:normal;white-space:nowrap;transform:scaleX(1.0674);transform-origin:0 50%;left:1069.5px;">Activate Windows</div>
<div style="top:677.90px;font-family:'Liberation Sans', sans-serif;font-size:13.7px;line-height:13.7px;color:rgba(120,120,120,0.42);font-weight:normal;white-space:nowrap;transform:scaleX(1.0876);transform-origin:0 50%;left:1069.5px;">Go to Settings to activate Windows.</div>
</body></html>
